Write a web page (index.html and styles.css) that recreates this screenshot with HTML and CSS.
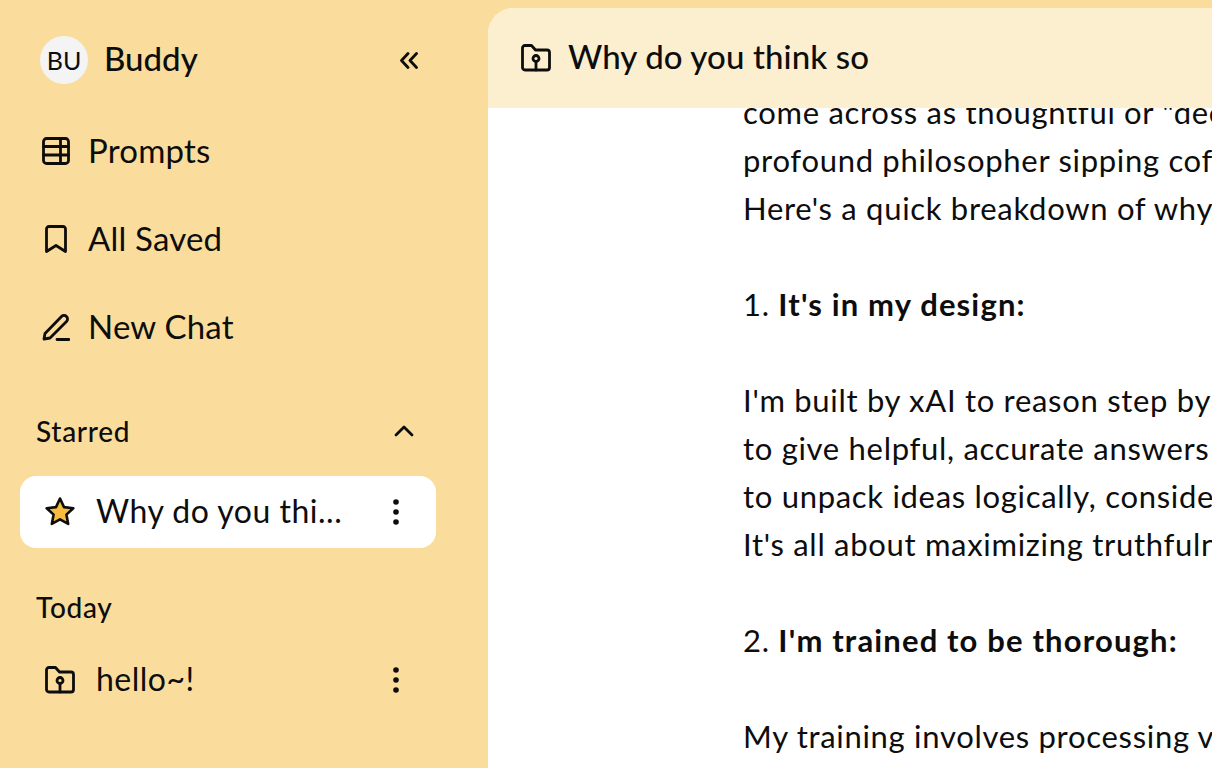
FILE: index.html
```html
<!DOCTYPE html>
<html lang="en">
<head>
    <meta charset="UTF-8">
    <meta name="viewport" content="width=device-width, initial-scale=1.0">
    <title>Buddy</title>
    <link rel="stylesheet" href="styles.css">
</head>
<body>
    <div class="app">
        <aside class="sidebar">
            <div class="brand">
                <div class="avatar">BU</div>
                <div class="brand-name">Buddy</div>
                <svg class="collapse" viewBox="0 0 18 17"><path d="M8 1.500 1.500 8.500 8 15.500M16.500 1.500 10 8.500l6.500 7"/></svg>
            </div>

            <nav class="nav">
                <div class="nav-item">
                    <svg class="icon" viewBox="0 0 28 28"><rect x="1.500" y="1.500" width="25" height="25" rx="3"/><path d="M1.500 9.500h25M1.500 18h25M18.500 1.500v25"/></svg>
                    <span>Prompts</span>
                </div>
                <div class="nav-item">
                    <svg class="icon" viewBox="0 0 28 28"><path d="M4.500 4A2.500 2.500 0 0 1 7 1.500h14A2.500 2.500 0 0 1 23.500 4v22.500L14 20.500l-9.500 6z"/></svg>
                    <span>All Saved</span>
                </div>
                <div class="nav-item">
                    <svg class="icon" viewBox="0 0 28 28"><path d="M2 26 3 20.500 19.500 3.500a3.500 3.500 0 0 1 5 5L8 25zM15 26.500h12"/></svg>
                    <span>New Chat</span>
                </div>
            </nav>

            <div class="section-label section-starred">
                <span>Starred</span>
                <svg class="chevron" viewBox="0 0 20 12"><path d="M2 10l8-8 8 8"/></svg>
            </div>
            <div class="chat-row active">
                <svg class="chat-icon star" viewBox="0 0 32 32"><path d="M16 2.500l4 8.600 9.300 1.100-6.900 6.400 1.800 9.300-8.200-4.600-8.200 4.600 1.800-9.300-6.900-6.400 9.300-1.100z"/></svg>
                <span class="chat-title">Why do you thi...</span>
                <svg class="dots" viewBox="0 0 8 28"><circle cx="4" cy="4" r="2.800"/><circle cx="4" cy="14" r="2.800"/><circle cx="4" cy="24" r="2.800"/></svg>
            </div>

            <div class="section-label section-today"><span>Today</span></div>
            <div class="chat-row">
                <svg class="chat-icon" viewBox="0 0 32 32"><path d="M2.500 6A2.500 2.500 0 0 1 5 3.500h6.500l4 4.500H27A2.500 2.500 0 0 1 29.500 10.500v15A2.500 2.500 0 0 1 27 28H5a2.500 2.500 0 0 1-2.500-2.500z"/><circle cx="16" cy="16.500" r="3"/><path d="M16 19.500V28"/></svg>
                <span class="chat-title">hello~!</span>
                <svg class="dots" viewBox="0 0 8 28"><circle cx="4" cy="4" r="2.800"/><circle cx="4" cy="14" r="2.800"/><circle cx="4" cy="24" r="2.800"/></svg>
            </div>
        </aside>

        <main class="main">
            <header class="topbar">
                <svg class="chat-icon" viewBox="0 0 32 32"><path d="M2.500 6A2.500 2.500 0 0 1 5 3.500h6.500l4 4.500H27A2.500 2.500 0 0 1 29.500 10.500v15A2.500 2.500 0 0 1 27 28H5a2.500 2.500 0 0 1-2.500-2.500z"/><circle cx="16" cy="16.500" r="3"/><path d="M16 19.500V28"/></svg>
                <h1>Why do you think so</h1>
            </header>
            <div class="messages">
                <div class="message">
                    <p>come across as thoughtful or "deep,"</p>
                    <p>profound philosopher sipping coffee</p>
                    <p>Here's a quick breakdown of why</p>
                    <p class="blank"></p>
                    <p>1. <strong>It's in my design:</strong></p>
                    <p class="blank"></p>
                    <p>I'm built by xAI to reason step by step</p>
                    <p>to give helpful, accurate answers</p>
                    <p>to unpack ideas logically, considering</p>
                    <p>It's all about maximizing truthfulness</p>
                    <p class="blank"></p>
                    <p>2. <strong>I'm trained to be thorough:</strong></p>
                    <p class="blank"></p>
                    <p>My training involves processing vast</p>
                </div>
            </div>
        </main>
    </div>
</body>
</html>
```

FILE: styles.css
```css
* {
    box-sizing: border-box;
}
body {
    margin: 0;
    height: 768px;
    overflow: hidden;
    background-color: #fadd9c;
    color: #0d0d0d;
    font-family: "Lato", "Noto Sans", sans-serif;
}
svg {
    display: block;
    flex: none;
    fill: none;
    stroke: #0d0d0d;
    stroke-width: 2.800;
    stroke-linecap: round;
    stroke-linejoin: round;
}
.app {
    display: flex;
    height: 768px;
}
.sidebar {
    width: 488px;
    flex: none;
    padding: 36px 52px 0 20px;
}
.brand {
    display: flex;
    align-items: center;
    height: 48px;
    padding-left: 20px;
}
.avatar {
    width: 48px;
    height: 48px;
    border-radius: 50%;
    background: #f4f4f5;
    display: flex;
    align-items: center;
    justify-content: center;
    font-size: 25px;
    flex: none;
}
.brand-name {
    margin: 0 0 4px 16px;
    font-size: 33px;
    font-weight: 500;
    flex: 1;
}
.collapse {
    width: 18px;
    height: 17px;
    margin-right: 18px;
}
.nav {
    margin-top: 23px;
    padding-left: 22px;
}
.nav-item {
    display: flex;
    align-items: center;
    height: 88px;
    gap: 18px;
    font-size: 33px;
    letter-spacing: 0.2px;
}
.nav-item span {
    margin-bottom: 2px;
}
.icon {
    width: 28px;
    height: 28px;
}
.section-label {
    display: flex;
    align-items: center;
    justify-content: space-between;
    height: 40px;
    padding: 0 22px 0 16px;
    font-size: 28px;
    font-weight: 500;
    letter-spacing: 0.7px;
}
.section-starred {
    margin-top: 40px;
}
.section-today {
    margin-top: 39px;
}
.chevron {
    width: 20px;
    height: 12px;
}
.chat-row {
    display: flex;
    align-items: center;
    height: 72px;
    padding: 0 36px 0 24px;
    border-radius: 16px;
    font-size: 32px;
}
.section-starred + .chat-row {
    margin-top: 25px;
}
.section-today + .chat-row {
    margin-top: 17px;
}
.active {
    background: #fff;
}
.chat-icon {
    width: 32px;
    height: 32px;
}
.star {
    fill: #f7bb3d;
    stroke-width: 2.600;
}
.chat-title {
    margin: 0 0 4px 20px;
    flex: 1;
    white-space: nowrap;
    letter-spacing: 0.5px;
}
.dots {
    width: 8px;
    height: 28px;
    fill: #0d0d0d;
    stroke: none;
}
.main {
    flex: 1;
    min-width: 0;
    margin-top: 8px;
    display: flex;
    flex-direction: column;
    background: #fff;
    border-top-left-radius: 26px;
    overflow: hidden;
}
.topbar {
    position: relative;
    z-index: 1;
    height: 100px;
    flex: none;
    display: flex;
    align-items: center;
    gap: 16px;
    padding-left: 32px;
    background: #fcefcf;
}
.topbar h1 {
    margin: 0 0 4px;
    font-size: 33px;
    font-weight: 500;
    letter-spacing: 0.1px;
}
.messages {
    flex: 1;
    overflow: hidden;
    padding-left: 255px;
}
.message {
    margin-top: -20px;
    font-size: 31px;
    line-height: 48px;
    letter-spacing: 0.7px;
    white-space: nowrap;
}
.message p {
    margin: 0;
}
.blank {
    height: 48px;
}
.message strong {
    font-weight: 700;
    letter-spacing: 1.150px;
}
```
